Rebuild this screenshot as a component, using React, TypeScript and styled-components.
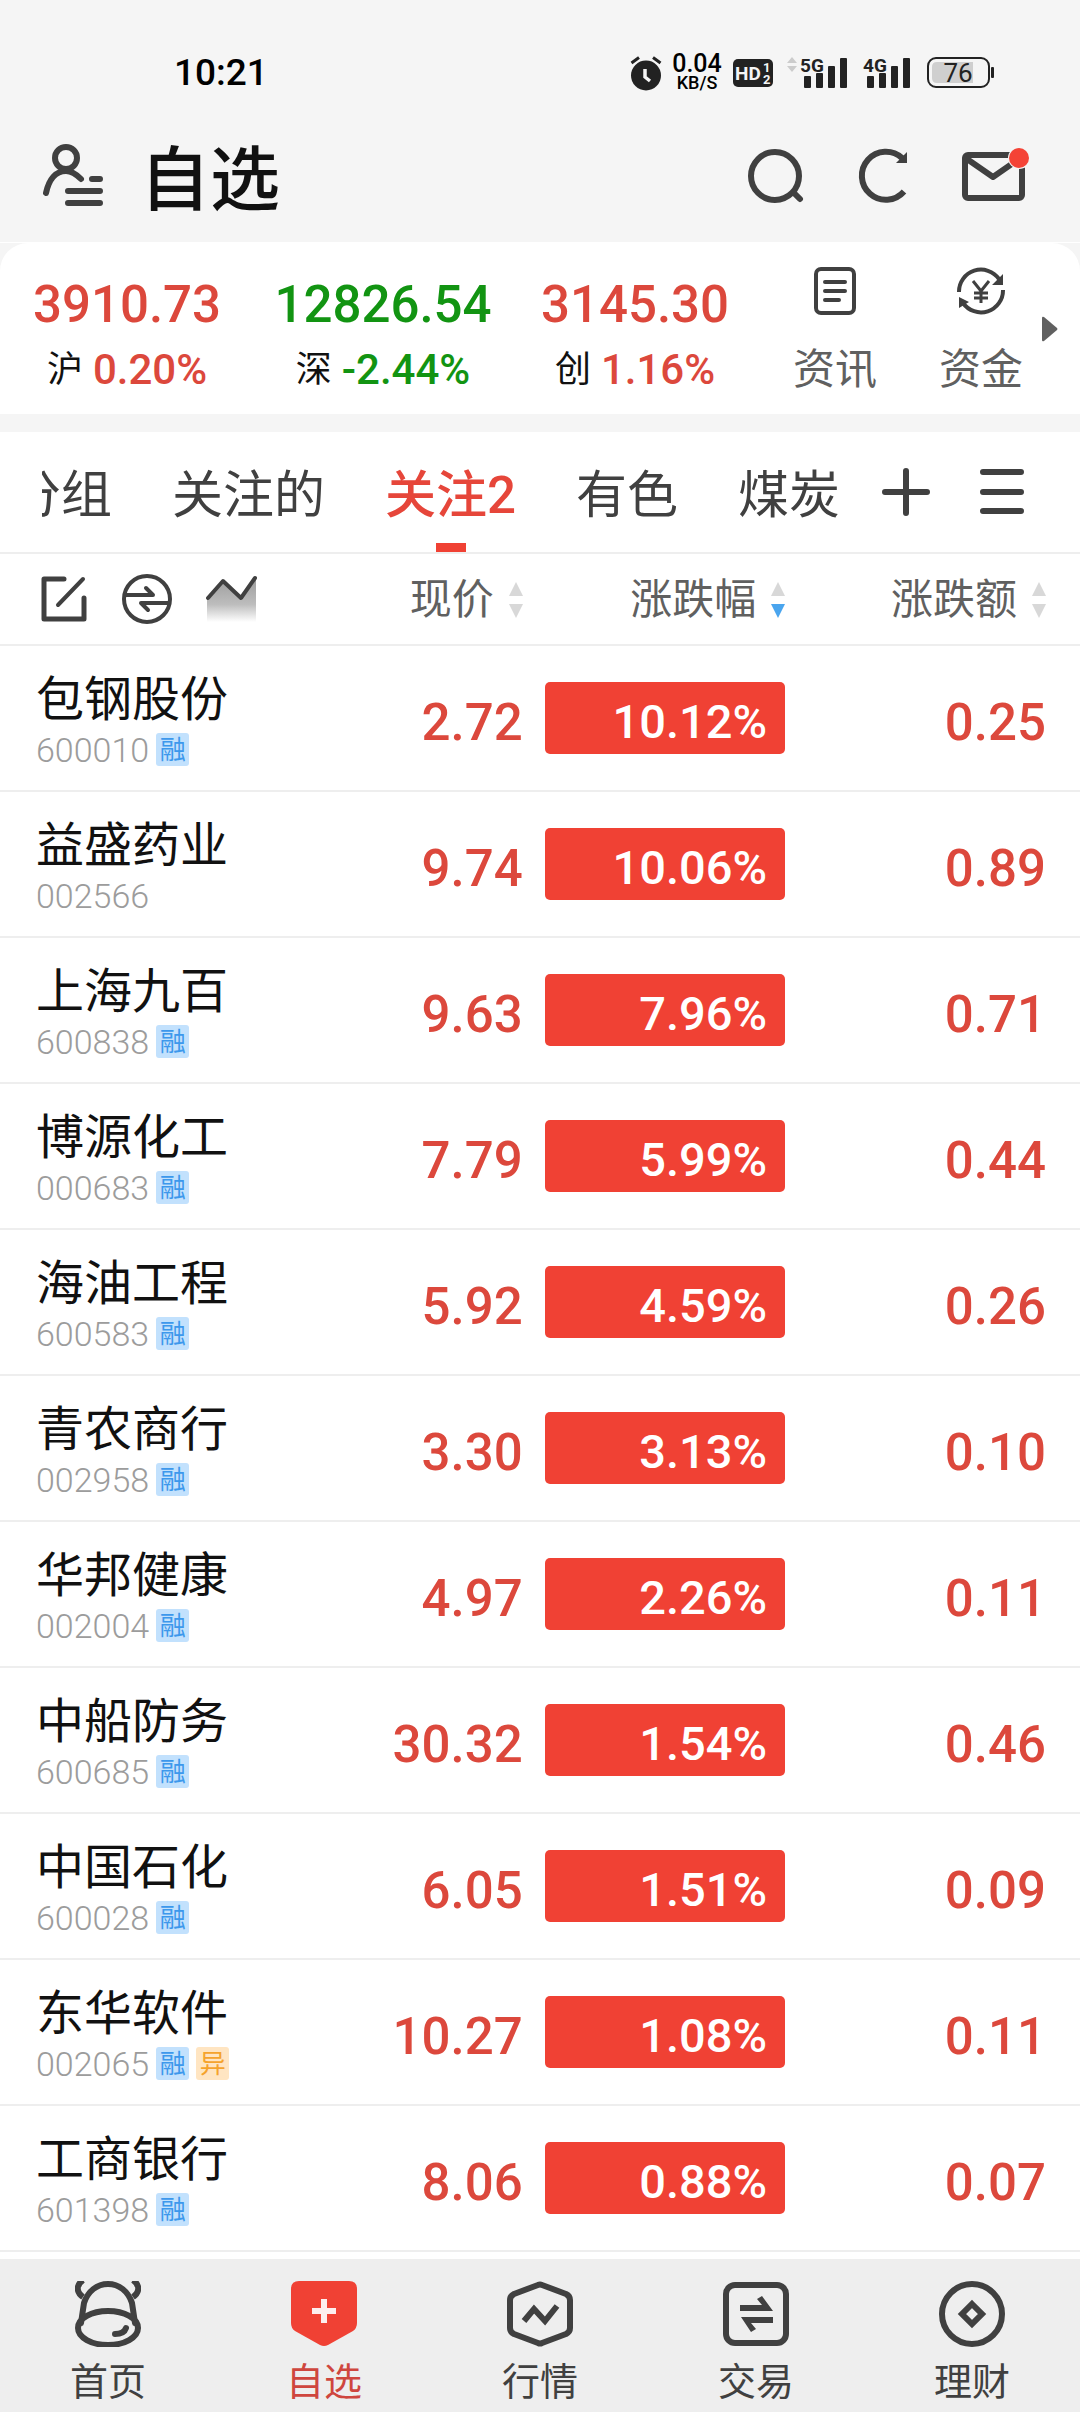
import React from 'react';
import styled, { createGlobalStyle } from 'styled-components';

const color = {
  ink: '#111111',
  dark: '#404040',
  muted: '#606060',
  code: '#9c9c9c',
  arrow: '#d8d8d8',
  line: '#eeeeee',
  shell: '#f5f5f5',
  rise: '#dc483c',
  fill: '#f04134',
  fall: '#129412',
  blue: '#4aa5ee',
};

const Global = createGlobalStyle`
  *, *::before, *::after { box-sizing: border-box; }
  body {
    margin: 0;
    background: #ffffff;
    color: ${color.ink};
    font-family: Roboto, "Noto Sans CJK SC", sans-serif;
  }
  button {
    margin: 0;
    padding: 0;
    border: 0;
    background: none;
    color: inherit;
    font: inherit;
    cursor: pointer;
  }
  a { color: inherit; text-decoration: none; }
  svg { display: block; flex: none; }
`;

const Page = styled.div`
  display: flex;
  flex-direction: column;
  min-height: 100vh;
`;

/* ---------- status bar ---------- */

const Shell = styled.header`
  background: ${color.shell};
`;

const StatusBar = styled.div`
  display: flex;
  justify-content: space-between;
  align-items: center;
  height: 110px;
  padding: 36px 86px 0 174px;
`;

const Clock = styled.time`
  color: #000000;
  font-size: 37px;
  font-weight: 500;
  line-height: 40px;
`;

const StatusIcons = styled.div`
  display: flex;
  align-items: center;
  color: #222222;
`;

const Speed = styled.div`
  display: flex;
  flex-direction: column;
  align-items: center;
  width: 54px;
  margin: 0 9px 0 8px;
  color: #000000;
  font-size: 25px;
  font-weight: 500;
  line-height: 20px;
`;

const SpeedUnit = styled.span`
  font-size: 18px;
  line-height: 18px;
`;

const SignalGroup = styled.div`
  display: flex;
  gap: 2px;
  margin: 0 16px 0 14px;
`;

/* ---------- title bar ---------- */

const TitleBar = styled.div`
  display: flex;
  align-items: center;
  height: 132px;
  padding: 0 50px 0 42px;
  color: ${color.dark};
`;

const Title = styled.h1`
  flex: 1;
  margin: 0 0 0 36px;
  padding-top: 10px;
  color: ${color.ink};
  font-size: 70px;
  font-weight: 500;
  line-height: 80px;
`;

const Actions = styled.div`
  display: flex;
  align-items: center;
  gap: 53px;
`;

/* ---------- index strip ---------- */

const IndexFrame = styled.section`
  border-top: 1px solid #ffffff;
  border-bottom: 18px solid ${color.shell};
  background: ${color.shell};
`;

const IndexStrip = styled.div`
  display: grid;
  grid-template-columns: 254fr 258fr 246fr 154fr 138fr 30fr;
  height: 171px;
  border-radius: 28px 28px 0 0;
  background: #ffffff;
`;

const IndexItem = styled.a`
  display: flex;
  flex-direction: column;
  align-items: center;
  padding-top: 31px;
`;

const IndexValue = styled.strong<{ $down?: boolean }>`
  color: ${(p) => (p.$down ? color.fall : color.rise)};
  font-size: 51px;
  font-weight: 500;
  line-height: 62px;
`;

const IndexChange = styled.span`
  display: flex;
  align-items: center;
  gap: 10px;
  margin-top: 10px;
  font-size: 36px;
  line-height: 48px;
`;

const ChangeRate = styled.span<{ $down?: boolean }>`
  color: ${(p) => (p.$down ? color.fall : color.rise)};
  font-size: 42px;
  font-weight: 500;
`;

const Shortcut = styled.a`
  display: flex;
  flex-direction: column;
  align-items: center;
  gap: 31px;
  padding-top: 24px;
  color: ${color.dark};
`;

const ShortcutLabel = styled.span`
  color: ${color.muted};
  font-size: 42px;
  line-height: 48px;
`;

const NextButton = styled.button`
  display: flex;
  align-items: center;
  justify-content: flex-start;
  margin-left: -8px;
`;

/* ---------- group tabs ---------- */

const TabBar = styled.nav`
  display: flex;
  align-items: center;
  height: 122px;
  padding: 0 54px 0 42px;
  border-bottom: 2px solid ${color.line};
  color: ${color.dark};
`;

const TabScroller = styled.div`
  display: flex;
  flex: 1;
  gap: 60px;
  height: 120px;
  min-width: 0;
  overflow: hidden;
`;

const Tab = styled.button<{ $active?: boolean; $scrolled?: boolean }>`
  display: flex;
  flex: none;
  flex-direction: column;
  align-items: center;
  justify-content: flex-end;
  margin-left: ${(p) => (p.$scrolled ? '-32px' : '0')};
  color: ${(p) => (p.$active ? '#e6463a' : 'inherit')};
  font-size: 51px;
  font-weight: ${(p) => (p.$active ? 500 : 400)};
  line-height: 60px;

  &::after {
    content: '';
    width: 30px;
    height: 9px;
    margin-top: 17px;
    background: ${(p) => (p.$active ? color.fill : 'transparent')};
  }
`;

const TabTools = styled.div`
  display: flex;
  align-items: center;
  gap: 48px;
  padding-left: 42px;
`;

/* ---------- quote table ---------- */

const Quotes = styled.table`
  width: 100%;
  margin-bottom: 7px;
  border-spacing: 0;
  table-layout: fixed;
`;

const HeadCell = styled.th<{ $width?: string; $end?: boolean }>`
  width: ${(p) => p.$width ?? 'auto'};
  height: 92px;
  padding: 0 ${(p) => (p.$end ? '34px' : '0')} 0 0;
  border-bottom: 2px solid ${color.line};
  color: ${color.muted};
  font-weight: 400;
`;

const HeadTools = styled.div`
  display: flex;
  align-items: center;
  gap: 34px;
  padding-left: 40px;
  color: ${color.dark};
`;

const SortButton = styled.button`
  display: flex;
  align-items: center;
  gap: 15px;
  margin-left: auto;
  padding-top: 1px;
  font-size: 42px;
  line-height: 50px;
`;

const Cell = styled.td<{ $end?: boolean }>`
  height: 146px;
  padding: 10px ${(p) => (p.$end ? '34px' : '0')} 0 0;
  border-bottom: 2px solid ${color.line};
  color: ${color.rise};
  font-size: 51px;
  font-weight: 500;
  line-height: 60px;
  text-align: right;
`;

const NameCell = styled.td`
  height: 146px;
  padding: 2px 0 0 36px;
  border-bottom: 2px solid ${color.line};
`;

const StockName = styled.div`
  font-size: 48px;
  line-height: 56px;
  white-space: nowrap;
`;

const StockMeta = styled.div`
  display: flex;
  align-items: center;
  gap: 7px;
  margin-top: 5px;
  color: ${color.code};
  font-size: 34px;
  font-weight: 300;
  line-height: 34px;
`;

const Tag = styled.span<{ $warn?: boolean }>`
  width: 33px;
  height: 33px;
  border-radius: 3px;
  background: ${(p) => (p.$warn ? '#ffe5c2' : '#c2e1fd')};
  color: ${(p) => (p.$warn ? '#f5a32c' : '#3c98ec')};
  font-size: 26px;
  font-weight: 400;
  line-height: 34px;
  text-align: center;
`;

const PillCell = styled(Cell)`
  padding-top: 0;
`;

const Pill = styled.div`
  width: 240px;
  height: 72px;
  margin-left: auto;
  padding: 5px 18px 0 0;
  border-radius: 5px;
  background: ${color.fill};
  color: #ffffff;
  font-size: 47px;
  line-height: 70px;
`;

/* ---------- bottom navigation ---------- */

const BottomNav = styled.nav`
  display: flex;
  flex: 1;
  background: ${color.line};
`;

const NavItem = styled.a<{ $active?: boolean }>`
  display: flex;
  flex: 1;
  flex-direction: column;
  align-items: center;
  gap: 13px;
  padding: 22px 0 8px;
  color: ${(p) => (p.$active ? '#cf463e' : color.dark)};
  font-size: 38px;
  line-height: 44px;
`;

/* ---------- drawings ---------- */

const AlarmIcon = () => (
  <svg width="32" height="36" viewBox="0 0 32 36" aria-hidden="true">
    <circle cx="16" cy="20.500" r="15" fill="currentColor" />
    <path d="M1.500 8 9 2.500M30.500 8 23 2.500" stroke="currentColor" strokeWidth="3" />
    <path d="M15 14v8l5 4" fill="none" stroke="#f5f5f5" strokeWidth="3.500" />
  </svg>
);

const HdIcon = () => (
  <svg width="40" height="28" viewBox="0 0 40 28" aria-hidden="true">
    <rect width="40" height="28" rx="5" fill="currentColor" />
    <g fill="#f5f5f5" fontFamily="Roboto" fontWeight="700">
      <text x="2" y="21" fontSize="19">HD</text>
      <text x="30" y="13" fontSize="13">1</text>
      <text x="30" y="25" fontSize="13">2</text>
    </g>
  </svg>
);

const SignalIcon = ({ label, traffic }: { label: string; traffic?: boolean }) => (
  <svg width="61" height="42" viewBox="0 -4 61 42" role="img" aria-label={label}>
    {traffic && <path d="M0 7h10L5 1zM0 10h10l-5 6z" fill="#cccccc" />}
    <text x="13" y="16" fontFamily="Roboto" fontSize="19" fontWeight="700" fill="currentColor">
      {label}
    </text>
    <g fill="currentColor">
      <rect x="17" y="20" width="7" height="12" rx="1" />
      <rect x="29" y="17" width="7" height="15" rx="1" />
      <rect x="41" y="10" width="7" height="22" rx="1" />
      <rect x="53" y="2" width="7" height="30" rx="1" />
    </g>
  </svg>
);

const BatteryIcon = () => (
  <svg width="67" height="32" viewBox="0 0 67 32" role="img" aria-label="76%">
    <rect x="1" y="1" width="61" height="29" rx="8" fill="none" stroke="currentColor" strokeWidth="2" />
    <path d="M10 5h36v21H10q-5 0-5-5V10q0-5 5-5z" fill="#cfcfcf" />
    <rect x="64" y="10" width="3" height="11" rx="1" fill="currentColor" />
    <text x="31" y="25" fontFamily="Roboto" fontSize="26" textAnchor="middle" fill="currentColor">76</text>
  </svg>
);

const stroke = {
  fill: 'none',
  stroke: 'currentColor',
  strokeLinecap: 'round' as const,
  strokeLinejoin: 'round' as const,
};

const ProfileIcon = () => (
  <svg width="62" height="64" viewBox="0 0 62 64" strokeWidth="6" {...stroke}>
    <circle cx="24" cy="14" r="11" />
    <path d="M4 49C7 35 14 27 24 27c6 0 11 4 15 8M50 35h8M26 47h32M26 59h32" />
  </svg>
);

const SearchIcon = () => (
  <svg width="56" height="56" viewBox="0 0 56 56" strokeWidth="6" {...stroke}>
    <circle cx="27" cy="28" r="24" />
    <path d="M46 45l6 6" />
  </svg>
);

const RefreshIcon = () => (
  <svg width="50" height="56" viewBox="0 0 50 56" fill="none" stroke="currentColor" strokeWidth="6">
    <path d="M47 43.500A24 24 0 1 1 45 10" />
    <path d="M50 4v11H39z" fill="currentColor" stroke="none" />
  </svg>
);

const MailIcon = () => (
  <svg width="70" height="60" viewBox="0 0 70 60" strokeWidth="6" {...stroke}>
    <rect x="5" y="9" width="57" height="43" rx="3" />
    <path d="M7 13l26 18 26-18" />
    <circle cx="59" cy="12" r="11" fill={color.shell} stroke="none" />
    <circle cx="59" cy="12" r="10" fill="#f44336" stroke="none" />
  </svg>
);

const NewsIcon = () => (
  <svg width="42" height="48" viewBox="0 0 42 48" strokeWidth="4" {...stroke}>
    <rect x="2" y="2" width="38" height="44" rx="5" />
    <path d="M11 15h20M11 24h20M11 33h14" />
  </svg>
);

const MoneyIcon = () => (
  <svg width="50" height="48" viewBox="0 0 50 48" fill="none" stroke="currentColor" strokeWidth="4">
    <path d="M3 25A22 22 0 0 1 43 12M47 23A22 22 0 0 1 7 36" />
    <path d="M47 7v11H36zM3 41V30l10 5z" fill="currentColor" stroke="none" />
    <path d="M17 14l8 10 8-10M25 24v12M18 26h14M18 31h14" strokeWidth="3" />
  </svg>
);

const NextIcon = () => (
  <svg width="16" height="26" viewBox="0 0 16 26">
    <path d="M0 2q0-2 2-1l13 11q1 1 0 2L2 25q-2 1-2-1z" fill="#606060" />
  </svg>
);

const PlusIcon = () => (
  <svg width="48" height="50" viewBox="0 0 48 50" strokeWidth="6" {...stroke}>
    <path d="M3 25h42M24 4v42" />
  </svg>
);

const MenuIcon = () => (
  <svg width="48" height="50" viewBox="0 0 48 50" strokeWidth="6" {...stroke}>
    <path d="M5 5h38M5 25h38M5 44h38" />
  </svg>
);

const EditIcon = () => (
  <svg width="48" height="48" viewBox="0 0 48 48" strokeWidth="4" {...stroke}>
    <path d="M24 4H4v40h40V23" strokeWidth="5" />
    <path d="M43 4L18 30" />
  </svg>
);

const ConvertIcon = () => (
  <svg width="50" height="50" viewBox="0 0 50 50" strokeWidth="4" {...stroke}>
    <circle cx="25" cy="25" r="23" />
    <path d="M3 21h28l-7-7M47 29H19l7 7" />
  </svg>
);

const TrendIcon = () => (
  <svg width="52" height="50" viewBox="0 0 52 50">
    <defs>
      <linearGradient id="trend-fade" x1="0" y1="0" x2="0" y2="1">
        <stop offset="0" stopColor="#9c9c9c" />
        <stop offset="0.600" stopColor="#bdbdbd" />
        <stop offset="1" stopColor="#ffffff" />
      </linearGradient>
    </defs>
    <path d="M1 24L17 7l18 17L50 4v44H1z" fill="url(#trend-fade)" />
    <path d="M2 24L17 7l18 17L49 4" strokeWidth="4" {...stroke} />
  </svg>
);

const SortIcon = ({ descending }: { descending?: boolean }) => (
  <svg width="14" height="36" viewBox="0 0 14 36">
    <path d="M0 14L7 0l7 14z" fill={color.arrow} />
    <path d="M0 22h14L7 36z" fill={descending ? color.blue : color.arrow} />
  </svg>
);

const BullIcon = () => (
  <svg width="66" height="66" viewBox="0 0 66 66" strokeWidth="6" {...stroke}>
    <path d="M6 42L9 22C13 10 22 3 33 3s20 7 24 19l3 20" />
    <ellipse cx="33" cy="47" rx="30" ry="17" />
    <path d="M8 -1C1 4 1 11 8 16M58 -1c7 5 7 12 0 17" strokeLinecap="butt" />
    <path d="M40 53q9 0 11-6" />
  </svg>
);

const WatchIcon = () => (
  <svg width="66" height="66" viewBox="0 0 66 66">
    <path
      d="M8 0h50q8 0 8 8v34q0 5-4 8L37 64q-4 2-8 0L4 50q-4-3-4-8V8q0-8 8-8z"
      fill={color.fill}
    />
    <path d="M33 18v24M21 30h24" stroke="#fdeeee" strokeWidth="6" />
  </svg>
);

const MarketIcon = () => (
  <svg width="66" height="66" viewBox="0 0 66 66" strokeWidth="6" {...stroke}>
    <path d="M31 4q2-1 4 0l24 9q4 2 4 6v28q0 4-4 6l-24 9q-2 1-4 0L7 53q-4-2-4-6V19q0-4 4-6z" />
    <path d="M17 40l10-12 11 12 12-15" strokeLinecap="butt" strokeLinejoin="miter" />
  </svg>
);

const TradeIcon = () => (
  <svg width="66" height="66" viewBox="0 0 66 66" fill="none" stroke="currentColor" strokeWidth="6">
    <rect x="3" y="4" width="60" height="58" rx="9" />
    <path
      d="M17 24v6h33L39 15l-5 3 5 6zM50 42v-6H18l10 15 5-3-5-6z"
      fill="currentColor"
      stroke="none"
    />
  </svg>
);

const WealthIcon = () => (
  <svg width="66" height="66" viewBox="0 0 66 66" fill="none" stroke="currentColor" strokeWidth="6">
    <circle cx="33" cy="33" r="30" />
    <path d="M33 23l10 10-10 10-10-10z" />
  </svg>
);

/* ---------- data ---------- */

const indexes = [
  { label: '沪', value: '3910.73', rate: '0.20%' },
  { label: '深', value: '12826.54', rate: '-2.44%', down: true },
  { label: '创', value: '3145.30', rate: '1.16%' },
];

const tabs = ['分组', '关注的', '关注2', '有色', '煤炭'];

const stocks = [
  { name: '包钢股份', code: '600010', tags: ['融'], price: '2.72', rate: '10.12%', diff: '0.25' },
  { name: '益盛药业', code: '002566', tags: [], price: '9.74', rate: '10.06%', diff: '0.89' },
  { name: '上海九百', code: '600838', tags: ['融'], price: '9.63', rate: '7.96%', diff: '0.71' },
  { name: '博源化工', code: '000683', tags: ['融'], price: '7.79', rate: '5.99%', diff: '0.44' },
  { name: '海油工程', code: '600583', tags: ['融'], price: '5.92', rate: '4.59%', diff: '0.26' },
  { name: '青农商行', code: '002958', tags: ['融'], price: '3.30', rate: '3.13%', diff: '0.10' },
  { name: '华邦健康', code: '002004', tags: ['融'], price: '4.97', rate: '2.26%', diff: '0.11' },
  { name: '中船防务', code: '600685', tags: ['融'], price: '30.32', rate: '1.54%', diff: '0.46' },
  { name: '中国石化', code: '600028', tags: ['融'], price: '6.05', rate: '1.51%', diff: '0.09' },
  { name: '东华软件', code: '002065', tags: ['融', '异'], price: '10.27', rate: '1.08%', diff: '0.11' },
  { name: '工商银行', code: '601398', tags: ['融'], price: '8.06', rate: '0.88%', diff: '0.07' },
];

const sections = [
  { label: '首页', Icon: BullIcon },
  { label: '自选', Icon: WatchIcon, active: true },
  { label: '行情', Icon: MarketIcon },
  { label: '交易', Icon: TradeIcon },
  { label: '理财', Icon: WealthIcon },
];

export default function App() {
  return (
    <Page>
      <Global />
      <Shell>
        <StatusBar>
          <Clock>10:21</Clock>
          <StatusIcons>
            <AlarmIcon />
            <Speed>
              <span>0.04</span>
              <SpeedUnit>KB/S</SpeedUnit>
            </Speed>
            <HdIcon />
            <SignalGroup>
              <SignalIcon label="5G" traffic />
              <SignalIcon label="4G" />
            </SignalGroup>
            <BatteryIcon />
          </StatusIcons>
        </StatusBar>
        <TitleBar>
          <button type="button" aria-label="账户"><ProfileIcon /></button>
          <Title>自选</Title>
          <Actions>
            <button type="button" aria-label="搜索"><SearchIcon /></button>
            <button type="button" aria-label="刷新"><RefreshIcon /></button>
            <button type="button" aria-label="消息"><MailIcon /></button>
          </Actions>
        </TitleBar>
      </Shell>

      <IndexFrame>
        <IndexStrip>
          {indexes.map((item) => (
            <IndexItem href="#" key={item.label}>
              <IndexValue $down={item.down}>{item.value}</IndexValue>
              <IndexChange>
                {item.label}
                <ChangeRate $down={item.down}>{item.rate}</ChangeRate>
              </IndexChange>
            </IndexItem>
          ))}
          <Shortcut href="#">
            <NewsIcon />
            <ShortcutLabel>资讯</ShortcutLabel>
          </Shortcut>
          <Shortcut href="#">
            <MoneyIcon />
            <ShortcutLabel>资金</ShortcutLabel>
          </Shortcut>
          <NextButton type="button" aria-label="更多"><NextIcon /></NextButton>
        </IndexStrip>
      </IndexFrame>

      <TabBar>
        <TabScroller>
          {tabs.map((tab, i) => (
            <Tab type="button" key={tab} $active={tab === '关注2'} $scrolled={i === 0}>
              {tab}
            </Tab>
          ))}
        </TabScroller>
        <TabTools>
          <button type="button" aria-label="添加"><PlusIcon /></button>
          <button type="button" aria-label="菜单"><MenuIcon /></button>
        </TabTools>
      </TabBar>

      <Quotes>
        <thead>
          <tr>
            <HeadCell $width="28%">
              <HeadTools>
                <button type="button" aria-label="编辑"><EditIcon /></button>
                <button type="button" aria-label="切换"><ConvertIcon /></button>
                <button type="button" aria-label="走势"><TrendIcon /></button>
              </HeadTools>
            </HeadCell>
            <HeadCell $width="20.4%">
              <SortButton type="button">现价<SortIcon /></SortButton>
            </HeadCell>
            <HeadCell $width="24.3%">
              <SortButton type="button">涨跌幅<SortIcon descending /></SortButton>
            </HeadCell>
            <HeadCell $end>
              <SortButton type="button">涨跌额<SortIcon /></SortButton>
            </HeadCell>
          </tr>
        </thead>
        <tbody>
          {stocks.map((stock) => (
            <tr key={stock.code}>
              <NameCell>
                <StockName>{stock.name}</StockName>
                <StockMeta>
                  {stock.code}
                  {stock.tags.map((tag) => (
                    <Tag key={tag} $warn={tag === '异'}>{tag}</Tag>
                  ))}
                </StockMeta>
              </NameCell>
              <Cell>{stock.price}</Cell>
              <PillCell><Pill>{stock.rate}</Pill></PillCell>
              <Cell $end>{stock.diff}</Cell>
            </tr>
          ))}
        </tbody>
      </Quotes>

      <BottomNav>
        {sections.map(({ label, Icon, active }) => (
          <NavItem href="#" key={label} $active={active}>
            <Icon />
            {label}
          </NavItem>
        ))}
      </BottomNav>
    </Page>
  );
}
